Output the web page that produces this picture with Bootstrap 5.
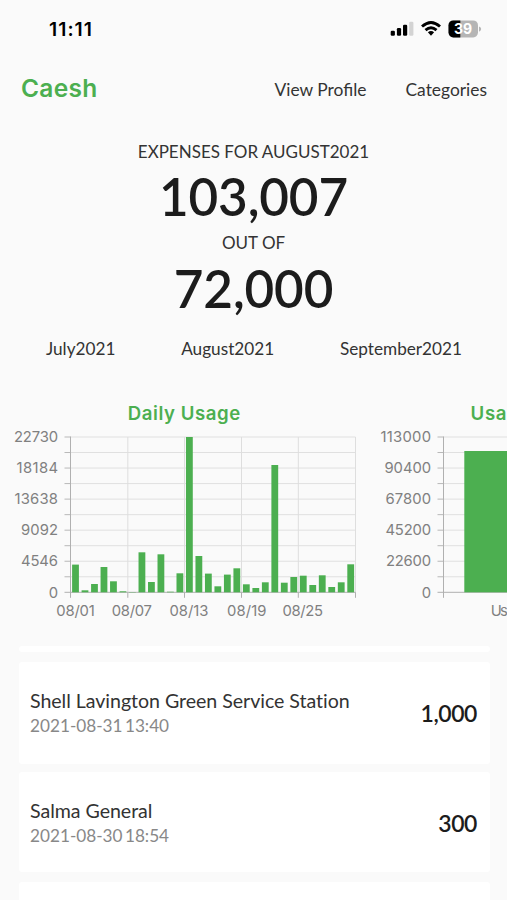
<!DOCTYPE html>
<html lang="en">
<head>
<meta charset="utf-8">
<meta name="viewport" content="width=device-width, initial-scale=1">
<title>Caesh</title>
<link rel="stylesheet" href="https://cdn.jsdelivr.net/npm/bootstrap@5.3.0/dist/css/bootstrap.min.css">
<style>
body{background:#fafafa;color:#333;font-family:Lato,sans-serif;height:900px;overflow:hidden}
.status-bar{height:58px;padding:0 25px 0 49px;color:#000}
.clock{font:600 19.3px/24px Inter,sans-serif;letter-spacing:1.05px}
.topbar{height:62px;padding:1px 20px 0 21px}
.brand{font:600 24.5px/30px Inter,sans-serif;color:#4caf50;letter-spacing:.3px;padding-bottom:3px}
.toplinks{gap:39px;padding-top:1px}
.toplink{font-size:17.4px;line-height:24px;color:#333;text-decoration:none}
.summary{height:202px;padding-top:20px}
.caption{font-size:17px;line-height:24px}
.amount{font-size:51.2px;font-weight:600;line-height:64px;color:#1c1c1c;padding-bottom:4px;letter-spacing:-.15px}
.amount+.caption{margin-top:-1px;margin-bottom:1px}
.months{height:54px;padding:0 45px 0 46px;font-size:17.2px}
.charts{height:270px}
.charts svg{display:block;flex:none;font-family:Inter,sans-serif}
.entries{height:254px;gap:8px;padding:0 17px 0 19px}
.entry{height:102px;background:#fff;border-radius:3px;padding:0 13px 0 11px;flex:none}
.stub{height:6px;margin-bottom:2px}
.entry.entry-salma{height:100px;padding-top:2px;margin-bottom:2px}
.entry.entry-next{height:18px;border-radius:3px 3px 0 0}
.entry-name{font-size:19.6px;line-height:25px;letter-spacing:-.04px}
.entry-date{font-size:17.2px;line-height:25px;color:#888;word-spacing:-2px}
.entry-sum{font-size:23px;font-weight:600;color:#1c1c1c;letter-spacing:-.45px}
</style>
<script src="https://cdn.jsdelivr.net/npm/bootstrap@5.3.0/dist/js/bootstrap.bundle.min.js"></script>
</head>
<body>
<header>
  <div class="status-bar d-flex align-items-center justify-content-between">
    <span class="clock">11:11</span>
    <svg width="92" height="20" viewBox="390 18.6 92 20" aria-hidden="true">
      <rect x="390.7" y="30.3" width="4.2" height="5" rx="1.2"/><rect x="396.9" y="27.7" width="4.2" height="7.6" rx="1.2"/><rect x="403" y="24.3" width="4.2" height="11" rx="1.2"/><rect x="409.2" y="21.3" width="4.2" height="14" rx="1.2" fill="#d3d3d3"/>
      <g fill="none" stroke="#000" stroke-width="2.9"><path d="M422 26.1Q431 17.9 440 26.1"/><path d="M425.5 29.8Q431 24.9 436.5 29.8"/></g>
      <path d="M427.9 31.9Q431 29.5 434.1 31.9L431 35.3Z"/>
      <rect x="448.5" y="20" width="29.5" height="17" rx="4.8" fill="#b5b5b5"/>
      <path d="M460.3 20h-7a4.8 4.8 0 0 0-4.8 4.8v7.4a4.8 4.8 0 0 0 4.8 4.8h7z"/>
      <path d="M479 26v5.3q2.2-.8 2.2-2.65T479 26z" fill="#b5b5b5"/>
      <text x="463" y="33.6" text-anchor="middle" fill="#fff" font-family="Inter,sans-serif" font-size="14" font-weight="700" textLength="18">39</text>
    </svg>
  </div>
  <nav class="topbar d-flex align-items-center">
    <a class="brand text-decoration-none me-auto" href="#">Caesh</a>
    <div class="toplinks d-flex"><a class="toplink" href="#">View Profile</a><a class="toplink" href="#">Categories</a></div>
  </nav>
</header>
<main>
  <section class="summary text-center">
    <div class="caption">EXPENSES FOR AUGUST2021</div>
    <div class="amount">103,007</div>
    <div class="caption">OUT OF</div>
    <div class="amount">72,000</div>
  </section>
  <div class="months d-flex align-items-center justify-content-between"><span>July2021</span><span>August2021</span><span>September2021</span></div>
  <section class="charts d-flex">
    <svg id="charts" width="507" height="270" viewBox="0 376 507 270"></svg>
  </section>
  <section class="entries d-flex flex-column">
    <div class="entry stub"></div>
    <div class="entry d-flex align-items-center justify-content-between"><div><div class="entry-name">Shell Lavington Green Service Station</div><div class="entry-date">2021-08-31 13:40</div></div><span class="entry-sum">1,000</span></div>
    <div class="entry entry-salma d-flex align-items-center justify-content-between"><div><div class="entry-name">Salma General</div><div class="entry-date">2021-08-30 18:54</div></div><span class="entry-sum">300</span></div>
    <div class="entry entry-next"></div>
  </section>
</main>
<script>
const svg = document.getElementById('charts');
function add(tag, attrs, text) {
  const el = document.createElementNS('http://www.w3.org/2000/svg', tag);
  for (const k in attrs) el.setAttribute(k, attrs[k]);
  if (text) el.textContent = text;
  svg.appendChild(el);
}
const line = (x1, y1, x2, y2, stroke) => add('line', {x1, y1, x2, y2, stroke, 'stroke-width': 1});
const label = (x, y, anchor, length, text) => add('text', {x, y, 'text-anchor': anchor, textLength: length, 'font-size': 14.8, fill: '#808080'}, text);
const title = (x, anchor, length, text) => add('text', {x, y: 419.7, 'text-anchor': anchor, textLength: length, 'font-size': 18.6, 'font-weight': 600, fill: '#4caf50'}, text);
const top0 = 437, base = 592.3, step = (base - top0) / 10;

function grid(left, right) {
  for (let i = 0; i < 10; i++) {
    const y = top0 + i * step;
    line(left, y, right, y, '#e0e0e0');
    line(left - 6, y, left, y, '#b8b8b8');
  }
}
function axes(left, right) {
  line(left, top0 - .5, left, base + 5.5, '#b0b0b0');
  line(left - 6, base, right, base, '#b0b0b0');
}

// Daily usage
title(184, 'middle', 112.5, 'Daily Usage');
grid(70.5, 355.5);
[127.8, 184.5, 241.5, 298.3, 355.5].forEach(x => {
  line(x, top0, x, base, '#dedede');
  line(x, base, x, base + 5.5, '#b0b0b0');
});
axes(70.5, 355.5);
[27.7, 2, 8.3, 25.3, 11, 1, .3, 40, 10.3, 38, .6, 19, 155.3, 36.3, 18.7, 6, 17.7, 24, 8, 4.3, 10, 127.3, 9.6, 15.3, 16.6, 7.3, 17, 5.3, 10, 28]
  .forEach((h, i) => add('rect', {x: 72.1 + i * 9.49, y: base - h, width: 6.8, height: h, fill: '#4caf50'}));
[['22730', 44], ['18184', 41.5], ['13638', 43.5], ['9092', 37], ['4546', 37], ['0', 9]]
  .forEach(([t, w], i) => label(58, 442.2 + i * step * 2, 'end', w, t));
[['08/01', 75.5, 38.5], ['08/07', 131.8, 40], ['08/13', 189, 39], ['08/19', 246.8, 39.5], ['08/25', 302.8, 40.5]]
  .forEach(([t, x, w]) => label(x, 615.9, 'middle', w, t));

// Monthly total, running off the right edge
title(470.5, 'start', 36, 'Usa');
grid(443.5, 507);
axes(443.5, 507);
add('rect', {x: 464.3, y: 451, width: 42.7, height: base - 451, fill: '#4caf50'});
[['113000', 50.5], ['90400', 46.5], ['67800', 45.5], ['45200', 45.5], ['22600', 45], ['0', 9]]
  .forEach(([t, w], i) => label(431, 442.2 + i * step * 2, 'end', w, t));
label(490.7, 615.9, 'start', 17, 'Us');
</script>
</body>
</html>
